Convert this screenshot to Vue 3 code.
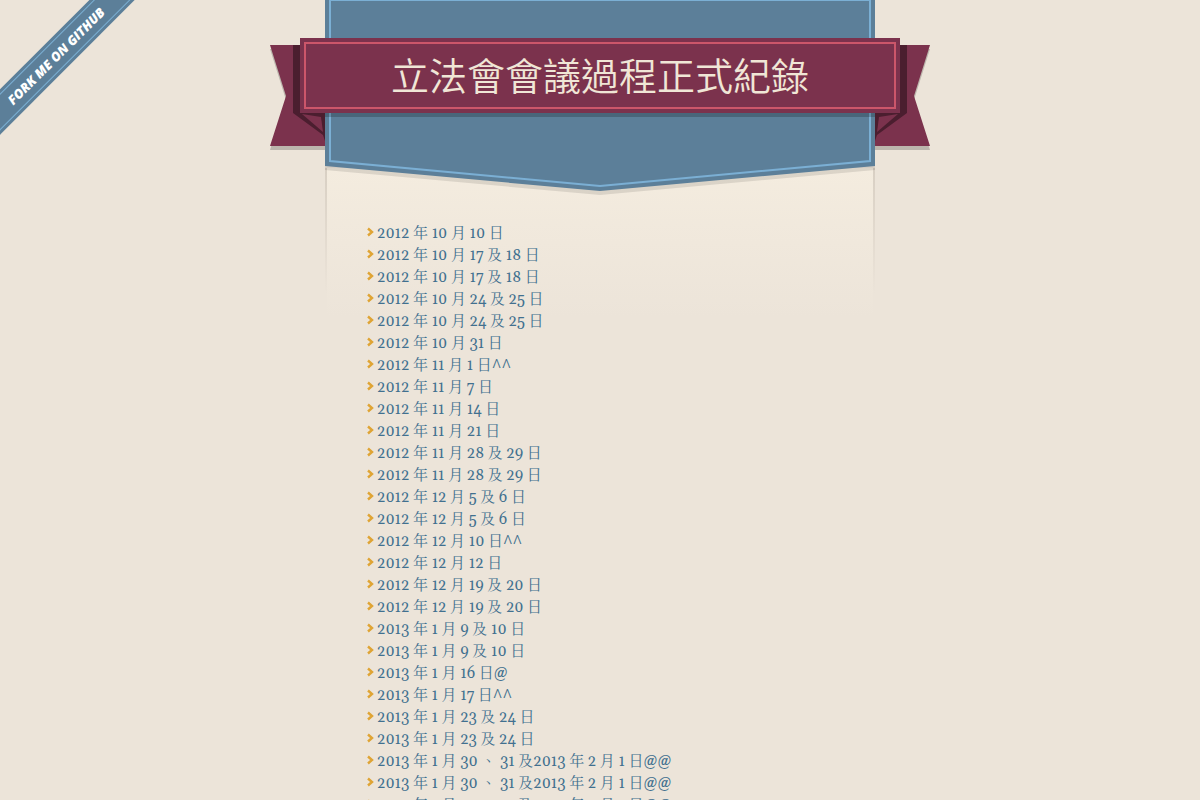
<script setup>
const records = [
  '2012 年 10 月 10 日',
  '2012 年 10 月 17 及 18 日',
  '2012 年 10 月 17 及 18 日',
  '2012 年 10 月 24 及 25 日',
  '2012 年 10 月 24 及 25 日',
  '2012 年 10 月 31 日',
  '2012 年 11 月 1 日^^',
  '2012 年 11 月 7 日',
  '2012 年 11 月 14 日',
  '2012 年 11 月 21 日',
  '2012 年 11 月 28 及 29 日',
  '2012 年 11 月 28 及 29 日',
  '2012 年 12 月 5 及 6 日',
  '2012 年 12 月 5 及 6 日',
  '2012 年 12 月 10 日^^',
  '2012 年 12 月 12 日',
  '2012 年 12 月 19 及 20 日',
  '2012 年 12 月 19 及 20 日',
  '2013 年 1 月 9 及 10 日',
  '2013 年 1 月 9 及 10 日',
  '2013 年 1 月 16 日@',
  '2013 年 1 月 17 日^^',
  '2013 年 1 月 23 及 24 日',
  '2013 年 1 月 23 及 24 日',
  '2013 年 1 月 30 、 31 及2013 年 2 月 1 日@@',
  '2013 年 1 月 30 、 31 及2013 年 2 月 1 日@@',
  '2013 年 1 月 30 、 31 及2013 年 2 月 1 日@@',
]
</script>

<template>
  <div class="page">
    <a class="fork" href="#"><span>Fork me on GitHub</span></a>

    <header class="header">
      <svg class="ribbon" width="660" height="200" viewBox="0 0 660 200" aria-hidden="true">
        <g fill="#000" fill-opacity="0.2">
          <path d="M0 49 16 100 0 150H55V49Z" />
          <path d="M660 49 644 100 660 150H605V49Z" />
        </g>
        <path fill="#000" fill-opacity="0.1" d="M55 160H605V170L330 195 55 170Z" />
        <g>
          <path fill="#7b324d" d="M0 45H56V146H0L16 96Z" />
          <path fill="#4b1e2f" d="M23 45H56V144L53 135 23 113Z" />
          <path fill="#7b324d" d="M32 114 51 117 53 132Z" />
        </g>
        <g transform="translate(660 0) scale(-1 1)">
          <path fill="#7b324d" d="M0 45H56V146H0L16 96Z" />
          <path fill="#4b1e2f" d="M23 45H56V144L53 135 23 113Z" />
          <path fill="#7b324d" d="M32 114 51 117 53 132Z" />
        </g>
        <path fill="#5c7f99" d="M55 0H605V166L330 191 55 166Z" />
        <path fill="none" stroke="#7bafd4" stroke-width="2" d="M60 0H600V161L330 186 60 161Z" />
        <path fill="#000" fill-opacity="0.2" d="M55 113H605V117H55Z" />
      </svg>
      <div class="banner">
        <h1>立法會會議過程正式紀錄</h1>
      </div>
    </header>

    <main class="sheet">
      <ul>
        <li v-for="(record, i) in records" :key="i">
          <svg width="7" height="14" viewBox="0 0 7 14" aria-hidden="true">
            <path fill="none" stroke="#dfa434" stroke-width="2.4" d="M1 1.5 5 5 1 8.5" />
          </svg>
          <a href="#">{{ record }}</a>
        </li>
      </ul>
    </main>
  </div>
</template>

<style>
body {
  background: #ece4d9;
}
</style>

<style scoped>
.page {
  position: relative;
  overflow: hidden;
  min-height: 100vh;
  font-family: Georgia, Gelasio, "Liberation Serif", "Noto Serif CJK TC", serif;
}

.fork {
  position: absolute;
  z-index: 2;
  top: 40px;
  left: -94px;
  box-sizing: border-box;
  width: 300px;
  height: 32px;
  padding: 3px 0;
  background: #5c7f99;
  transform: rotate(-45deg);
  text-decoration: none;
}

.fork span {
  display: block;
  border: solid #7bafd4;
  border-width: 1px 0;
  color: #fff;
  font: italic 800 13px/24px "Open Sans", sans-serif;
  text-align: center;
  text-transform: uppercase;
}

.header {
  position: relative;
  box-sizing: border-box;
  max-width: 660px;
  height: 168px;
  margin: 0 auto;
  padding: 38px 30px 0;
}

.ribbon {
  position: absolute;
  z-index: 1;
  top: 0;
  left: 0;
}

.banner {
  position: relative;
  z-index: 2;
  padding: 4px;
  background: #7b324d;
}

h1 {
  margin: 0;
  padding-bottom: 4px;
  border: 2px solid #cc566a;
  color: #f0e6d6;
  font: 350 38px/59px "Noto Sans CJK TC", sans-serif;
  text-align: center;
}

.sheet {
  position: relative;
  box-sizing: border-box;
  max-width: 550px;
  margin: 0 auto;
  padding: 55px 42px 40px;
  background: linear-gradient(#f4ecdf, #ece4d9) no-repeat 2px 0 / 546px 150px;
}

.sheet::before {
  position: absolute;
  inset: 0 0 auto;
  height: 125px;
  border: 2px solid;
  border-width: 0 2px;
  border-image: linear-gradient(#d8cfc3, #ece4d9) 1;
  content: "";
}

ul {
  position: relative;
  margin: 0;
  padding: 0;
  list-style: none;
}

li {
  display: flex;
  align-items: center;
  gap: 3px;
  height: 22px;
}

li a {
  color: #41708f;
  font-size: 15px;
  line-height: 22px;
  text-decoration: none;
}
</style>
